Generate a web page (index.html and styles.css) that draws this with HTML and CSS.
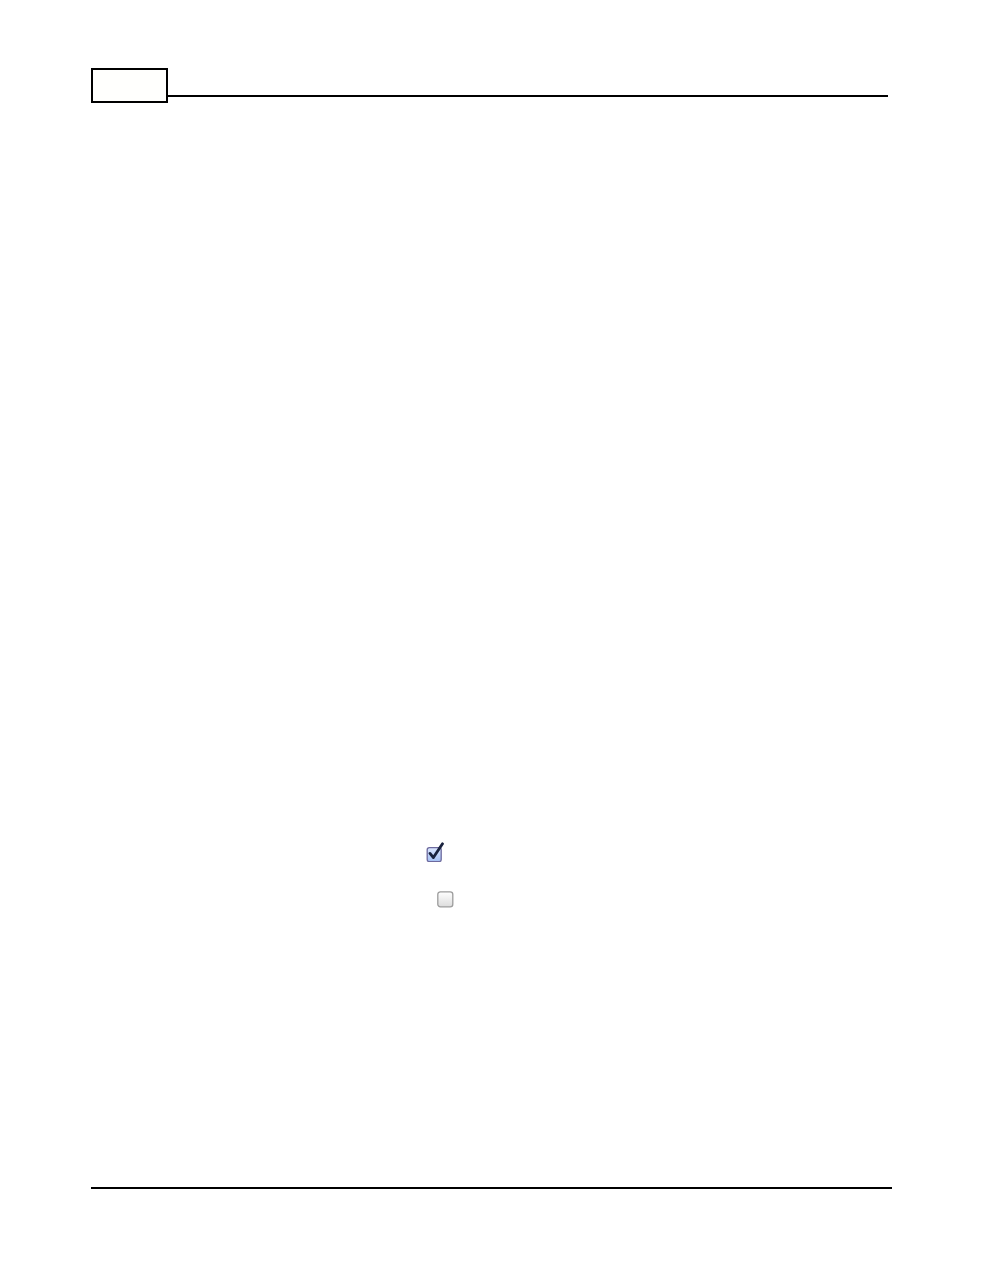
FILE: index.html
```html
<!DOCTYPE html>
<html lang="en">
<head>
<meta charset="utf-8">
<title>Page</title>
<link rel="stylesheet" href="styles.css">
</head>
<body>
<div class="page">
  <header class="page-header">
    <div class="page-number"></div>
    <div class="header-rule"></div>
  </header>

  <main class="page-body">
    <ul class="option-list">
      <li class="option option-checked">
        <svg class="check-icon" width="18" height="20" viewBox="0 0 18 20" aria-hidden="true">
          <defs>
            <linearGradient id="checkedFill" x1="0" y1="0" x2="0" y2="1">
              <stop offset="0" stop-color="#dde8ff"/>
              <stop offset="1" stop-color="#a3bff3"/>
            </linearGradient>
          </defs>
          <rect x="1.2" y="5.6" width="14" height="14" rx="2.2" fill="url(#checkedFill)" stroke="#6d6a9e" stroke-width="1.3"/>
          <path d="M4 11.4 L7.4 15.6 L16.5 1.8" fill="none" stroke="#19223e" stroke-width="2.8" stroke-linecap="round" stroke-linejoin="round"/>
        </svg>
      </li>
      <li class="option option-unchecked">
        <svg class="check-icon" width="17" height="17" viewBox="0 0 17 17" aria-hidden="true">
          <defs>
            <linearGradient id="emptyFill" x1="0" y1="0" x2="0" y2="1">
              <stop offset="0" stop-color="#ffffff"/>
              <stop offset="1" stop-color="#dcdcdc"/>
            </linearGradient>
          </defs>
          <rect x="0.8" y="0.8" width="15" height="15" rx="2.6" fill="url(#emptyFill)" stroke="#9c9c9c" stroke-width="1.3"/>
        </svg>
      </li>
    </ul>
  </main>

  <footer class="page-footer">
    <div class="footer-rule"></div>
  </footer>
</div>
</body>
</html>
```

FILE: styles.css
```css
html, body {
  margin: 0;
  padding: 0;
  background: #ffffff;
}

body {
  font-family: "Liberation Sans", Arial, sans-serif;
}

.page {
  width: 981px;
  min-height: 1270px;
  box-sizing: border-box;
  padding-top: 68px;
}

/* running header: page number box with rule to the right */
.page-header {
  display: flex;
  align-items: flex-start;
  padding-left: 91px;
}

.page-number {
  box-sizing: border-box;
  width: 77px;
  height: 35px;
  border: 2px solid #000000;
  background: #fffffd;
}

.header-rule {
  width: 720px;
  height: 1.5px;
  margin-top: 27px;
  background: #000000;
}

.page-body {
  padding-left: 91px;
  padding-top: 739px;
}

.option-list {
  list-style: none;
  margin: 0;
  padding: 0;
  display: flex;
  flex-direction: column;
  gap: 29px;
}

.option {
  display: flex;
  height: 20px;
  align-items: flex-start;
}

.option-checked {
  padding-left: 335px;
}

.option-unchecked {
  padding-left: 346px;
  height: 17px;
}

.check-icon {
  display: block;
}

.page-footer {
  padding-left: 91px;
  padding-top: 279px;
}

.footer-rule {
  width: 801px;
  height: 1.5px;
  background: #000000;
}
```
